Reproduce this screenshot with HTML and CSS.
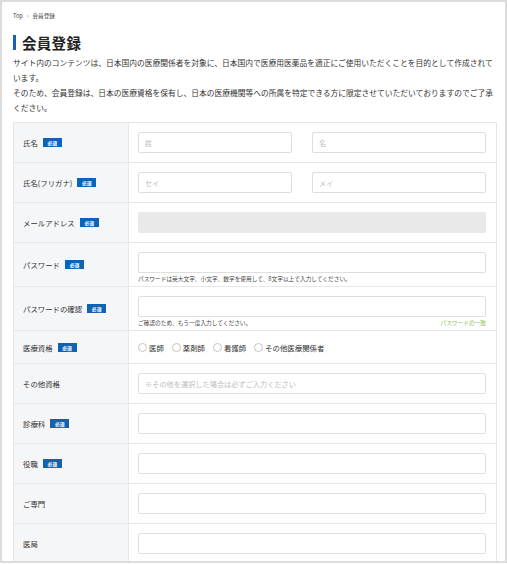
FILE: index.html
```html
<!DOCTYPE html>
<html lang="ja">
<head>
<meta charset="utf-8">
<title>会員登録</title>
<link rel="stylesheet" href="styles.css">
</head>
<body>
<div class="frame">
  <nav class="crumbs"><span>Top</span><span class="sep">›</span><span>会員登録</span></nav>
  <h1 class="title">会員登録</h1>
  <div class="intro">
    <p>サイト内のコンテンツは、日本国内の医療関係者を対象に、日本国内で医療用医薬品を適正にご使用いただくことを目的として作成されて<br>います。</p>
    <p>そのため、会員登録は、日本の医療資格を保有し、日本の医療機関等への所属を特定できる方に限定させていただいておりますのでご了承<br>ください。</p>
  </div>
  <div class="table">
    <div class="row">
      <div class="label">氏名<span class="req">必須</span></div>
      <div class="field split">
        <input class="inp first" type="text" placeholder="姓">
        <input class="inp" type="text" placeholder="名">
      </div>
    </div>
    <div class="row">
      <div class="label">氏名(フリガナ)<span class="req">必須</span></div>
      <div class="field split">
        <input class="inp first" type="text" placeholder="セイ">
        <input class="inp" type="text" placeholder="メイ">
      </div>
    </div>
    <div class="row">
      <div class="label">メールアドレス<span class="req">必須</span></div>
      <div class="field"><input class="inp disabled" type="text" disabled></div>
    </div>
    <div class="row">
      <div class="label">パスワード<span class="req">必須</span></div>
      <div class="field tight">
        <input class="inp" type="password">
        <div class="help"><span>パスワードは英大文字、小文字、数字を使用して、8文字以上で入力してください。</span></div>
      </div>
    </div>
    <div class="row">
      <div class="label">パスワードの確認<span class="req">必須</span></div>
      <div class="field tight">
        <input class="inp" type="password">
        <div class="help"><span>ご確認のため、もう一度入力してください。</span><span class="ok">パスワードの一致</span></div>
      </div>
    </div>
    <div class="row">
      <div class="label">医療資格<span class="req">必須</span></div>
      <div class="field radios">
        <label class="radio"><span class="dot"></span>医師</label>
        <label class="radio"><span class="dot"></span>薬剤師</label>
        <label class="radio"><span class="dot"></span>看護師</label>
        <label class="radio"><span class="dot"></span>その他医療関係者</label>
      </div>
    </div>
    <div class="row">
      <div class="label">その他資格</div>
      <div class="field"><input class="inp" type="text" placeholder="※その他を選択した場合は必ずご入力ください"></div>
    </div>
    <div class="row">
      <div class="label">診療科<span class="req">必須</span></div>
      <div class="field"><input class="inp" type="text"></div>
    </div>
    <div class="row">
      <div class="label">役職<span class="req">必須</span></div>
      <div class="field"><input class="inp" type="text"></div>
    </div>
    <div class="row">
      <div class="label">ご専門</div>
      <div class="field"><input class="inp" type="text"></div>
    </div>
    <div class="row">
      <div class="label">医局</div>
      <div class="field"><input class="inp" type="text"></div>
    </div>
  </div>
</div>
</body>
</html>
```
FILE: styles.css
```css
* { box-sizing: border-box; }
html, body { margin: 0; padding: 0; background: #fff; }
body {
  font-family: "Noto Sans CJK JP", "Noto Sans", sans-serif;
  color: #333;
}
.frame {
  width: 507px;
  height: 563px;
  border: 2px solid #dcdcdc;
  padding: 9px 8px 0 11px;
  overflow: hidden;
}
.crumbs {
  font-size: 5.6px;
  line-height: 10px;
  color: #444;
  display: flex;
  gap: 4px;
}
.crumbs .sep { color: #666; }
.title {
  margin: 14px 0 0;
  font-size: 14.5px;
  line-height: 15px;
  font-weight: 700;
  color: #222;
  border-left: 3px solid #1a5fb4;
  padding-left: 6px;
  letter-spacing: 0.3px;
}
.intro {
  margin-top: 4.5px;
  font-size: 7.75px;
  line-height: 15px;
  white-space: nowrap;
  color: #333;
}
.intro p { margin: 0; }
.table {
  margin-top: 7.5px;
  width: 484px;
  border: 1px solid #e6e6e6;
}
.row {
  display: grid;
  grid-template-columns: 115px 1fr;
  border-bottom: 1px solid #e8e8e8;
}
.label {
  background: #f5f6f8;
  border-right: 1px solid #e8e8e8;
  display: flex;
  align-items: center;
  padding-left: 9px;
  font-size: 7.4px;
  color: #333;
}
.req {
  display: inline-block;
  margin-left: 5px;
  width: 19px;
  height: 9px;
  line-height: 9px;
  text-align: center;
  background: #0f62b4;
  color: #fff;
  font-size: 4.8px;
  font-weight: 700;
}
.field {
  padding: 9px 10px 9px 9px;
}
.field.tight { padding-bottom: 3px; }
.split {
  display: grid;
  grid-template-columns: 1fr 1fr;
}
.inp {
  display: block;
  width: 100%;
  height: 21px;
  margin: 0;
  border: 1px solid #dedede;
  border-radius: 2px;
  background: #fff;
  padding: 0 6px;
  font-family: inherit;
  font-size: 7.2px;
  color: #333;
  outline: none;
  -webkit-appearance: none;
  appearance: none;
}
.inp::placeholder { color: #bdbdbd; }
.split .inp.first { width: calc(100% - 20px); }
.inp.disabled {
  background: #e9e9e9;
  border-color: #e9e9e9;
}
.help {
  margin-top: 2px;
  display: flex;
  justify-content: space-between;
  font-size: 5.7px;
  line-height: 8px;
  color: #444;
}
.help .ok { color: #8cc152; }
.radios {
  display: flex;
  align-items: center;
  gap: 8px;
  height: 32px;
  padding-top: 0;
  padding-bottom: 0;
}
.radio {
  display: flex;
  align-items: center;
  gap: 2px;
  font-size: 7.4px;
  color: #333;
}
.dot {
  width: 9px;
  height: 9px;
  border: 1px solid #c4c4c4;
  border-radius: 50%;
  background: #fff;
}
```
